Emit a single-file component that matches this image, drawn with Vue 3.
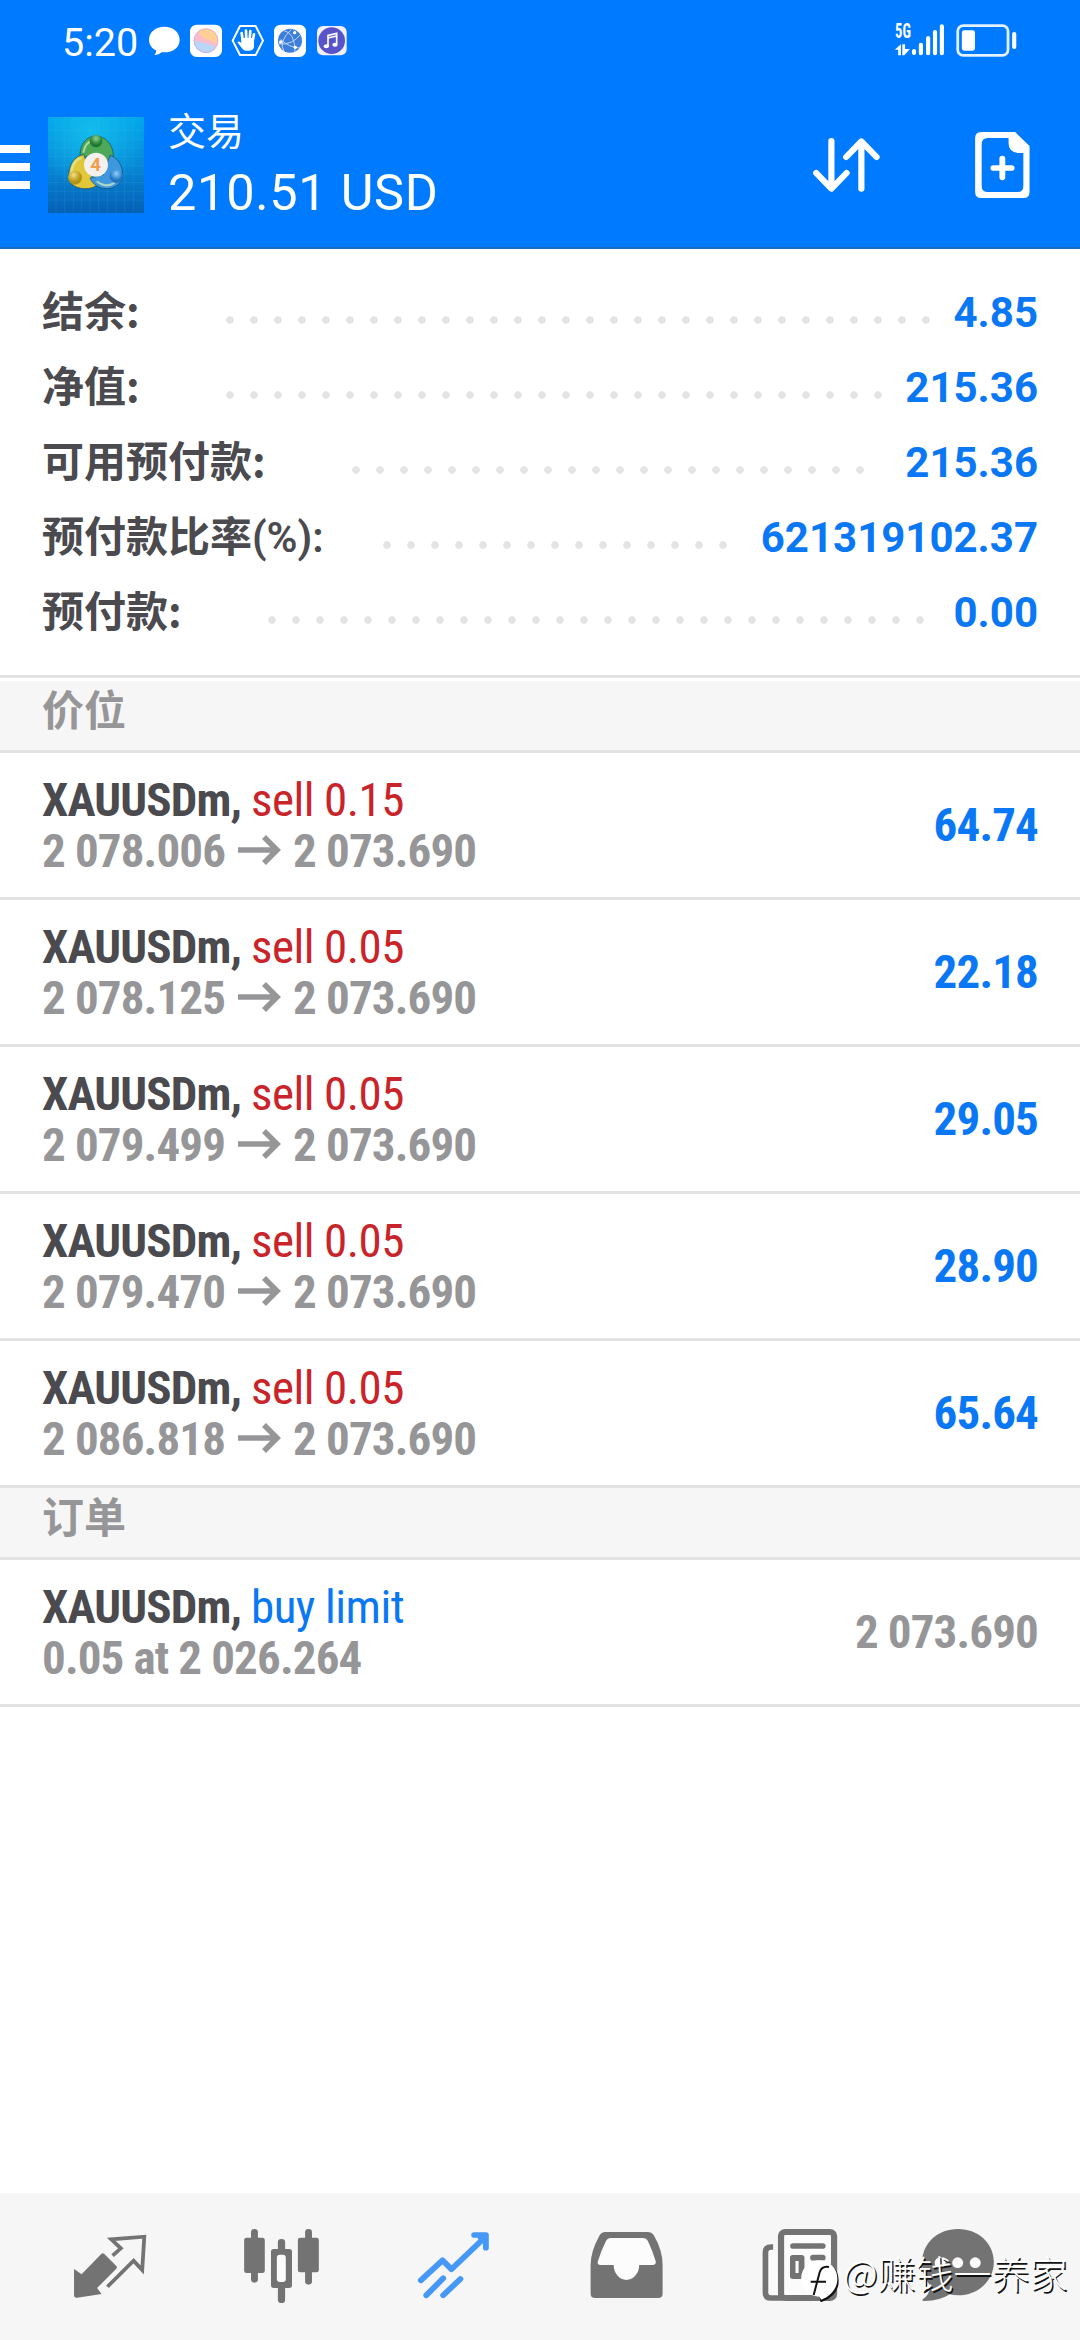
<script setup>
const summary = [
  { label: '结余:', value: '4.85', dots: 30 },
  { label: '净值:', value: '215.36', dots: 28 },
  { label: '可用预付款:', value: '215.36', dots: 22 },
  { label: '预付款比率', unit: '(%):', value: '621319102.37', dots: 15 },
  { label: '预付款:', value: '0.00', dots: 28 },
]

const positions = [
  { volume: '0.15', open: '2 078.006', profit: '64.74' },
  { volume: '0.05', open: '2 078.125', profit: '22.18' },
  { volume: '0.05', open: '2 079.499', profit: '29.05' },
  { volume: '0.05', open: '2 079.470', profit: '28.90' },
  { volume: '0.05', open: '2 086.818', profit: '65.64' },
]
</script>

<template>
  <div class="app">
    <header class="header">
      <div class="status">
        <span class="time">5:20</span>
        <svg class="notices" viewBox="0 0 660 135">
          <path d="M73 20c26 0 46 16 46 39s-20 38-46 38l-8 0c-5 5-13 8-22 8 4-4 6-9 5-14-13-6-21-18-21-32 0-23 20-39 46-39z" fill="#fff" />
          <rect x="150" y="14" width="96" height="97" rx="20" fill="#fff" />
          <circle cx="198" cy="62" r="36" fill="#f9bccb" />
          <path d="M175 34a36 36 0 0 1 58 34c-8 8-17-8-30-10-16-3-22-12-28-24z" fill="#ffcf96" />
          <path d="M162 66c14-8 22 4 33 4 13 0 20 8 33 12a36 36 0 0 1-66-16z" fill="#b9d6f7" />
          <circle cx="198" cy="62" r="36" fill="none" stroke="#d3a0d3" stroke-width="2" />
          <path d="M300 18h47l22 44-22 43h-47l-22-43z" fill="none" stroke="#fff" stroke-width="6" stroke-linejoin="round" />
          <path d="M308 60l-3-21M319 58l-1-26M329 58l2-25M338 64l4-21" stroke="#fff" stroke-width="8" stroke-linecap="round" />
          <path d="M304 54h38v24q0 14-14 14h-11q-7 0-11-7l-14-18q5-6 12 2z" fill="#fff" />
          <rect x="402" y="14" width="96" height="97" rx="20" fill="#fff" />
          <circle cx="450" cy="62" r="36" fill="#3d7ddb" />
          <path d="M432 32q33 6 33 64M417 72q40 4 66-30M432 94q-18-28 22-66M422 58q25 25 58 26" fill="none" stroke="#bcd8fa" stroke-width="3" />
          <circle cx="464" cy="38" r="5" fill="#fff" /><circle cx="422" cy="66" r="5" fill="#fff" /><circle cx="466" cy="82" r="5" fill="#fff" />
          <rect x="531" y="18" width="89" height="88" rx="18" fill="#f3efff" />
          <circle cx="575" cy="62" r="40" fill="#5853c8" />
          <path d="M564 78V46l26-6v33M564 54l26-6" fill="none" stroke="#fff" stroke-width="5" />
          <ellipse cx="559" cy="79" rx="8" ry="6" fill="#fff" /><ellipse cx="585" cy="74" rx="8" ry="6" fill="#fff" />
        </svg>
        <svg class="signal" viewBox="1025 60 365 120" preserveAspectRatio="none">
          <text x="1031" y="115" textLength="46" lengthAdjust="spacingAndGlyphs" class="net">5G</text>
          <path d="M1030 149l18-16v33h-8v-17zM1052 133h8v14h14l-16 19h-6z" fill="#fff" />
          <g stroke="#fff" stroke-width="12" stroke-linecap="round">
            <path d="M1086 153v6M1106 134v26M1127 114v46M1147 96v64M1167 79v81" />
          </g>
          <rect x="1213" y="77" width="146" height="89" rx="16" fill="none" stroke="#e4f1ff" stroke-width="8" />
          <rect x="1225" y="91" width="38" height="61" rx="7" fill="#fff" />
          <rect x="1371" y="96" width="12" height="51" rx="6" fill="#fff" />
        </svg>
      </div>
      <div class="toolbar">
        <div class="menu"><i></i><i></i><i></i></div>
        <svg class="logo" viewBox="54 51 288 288">
          <defs>
            <linearGradient id="bg" x1="0" y1="0" x2="0" y2="1">
              <stop offset="0" stop-color="#00a3ea" /><stop offset=".5" stop-color="#0788d6" /><stop offset="1" stop-color="#0560b4" />
            </linearGradient>
            <radialGradient id="glow" cx=".45" cy=".15" r=".6">
              <stop offset="0" stop-color="#17c3ee" stop-opacity=".8" /><stop offset="1" stop-color="#17c3ee" stop-opacity="0" />
            </radialGradient>
            <radialGradient id="gb" cx=".5" cy=".3"><stop offset="0" stop-color="#8fd08a" /><stop offset="1" stop-color="#1f7a36" /></radialGradient>
            <radialGradient id="yb" cx=".4" cy=".3"><stop offset="0" stop-color="#f6e07a" /><stop offset="1" stop-color="#b39316" /></radialGradient>
            <radialGradient id="bb" cx=".5" cy=".3"><stop offset="0" stop-color="#8fd0fa" /><stop offset="1" stop-color="#1f74c4" /></radialGradient>
          </defs>
          <rect x="54" y="51" width="288" height="288" fill="url(#bg)" />
          <rect x="54" y="51" width="288" height="288" fill="url(#glow)" />
          <path d="M78 51v288M104 51v288M130 51v288M154 51v288M180 51v288M206 51v288M232 51v288M258 51v288M284 51v288M310 51v288M54 92h288M54 118h288M54 144h288M54 170h288M54 196h288M54 222h288M54 248h288M54 274h288M54 300h288" stroke="#5cc4ee" stroke-opacity=".2" stroke-width="2" />
          <g stroke="#0b4a5e" stroke-opacity=".65" stroke-width="3">
            <path d="M150 166c0-34 20-58 48-58s52 26 52 60c0 14-4 26-12 34l-40-40-36 10z" fill="#4da857" />
            <path d="M162 164c-28 2-46 30-46 66 0 20 18 34 46 36 18 1 32-4 40-12l-24-36z" fill="#e0c83a" />
            <path d="M240 166c22 6 38 30 38 58 0 26-24 42-48 42-22 0-42-12-50-32l40-10z" fill="#3f97de" />
          </g>
          <path d="M160 158q6-34 30-36M124 222q2-40 30-48M200 244q30 22 54 4" fill="none" stroke="#d8f0b8" stroke-opacity=".7" stroke-width="6" />
          <circle cx="198" cy="123" r="19" fill="url(#gb)" />
          <circle cx="135" cy="233" r="21" fill="url(#yb)" />
          <circle cx="259" cy="229" r="20" fill="url(#bb)" />
          <circle cx="198" cy="194" r="36" fill="#f4f0ee" />
          <text x="197" y="214" text-anchor="middle" class="four">4</text>
        </svg>
        <div class="heading">
          <div class="title">交易</div>
          <div class="amount">210.51 USD</div>
        </div>
        <svg class="sort" viewBox="780 396 220 200" preserveAspectRatio="none">
          <path d="M845 423v142M801 519l44 47 44-47M932 566V425M888 471l44-47 44 47" fill="none" stroke="#fff" stroke-width="18" stroke-linecap="round" stroke-linejoin="round" />
        </svg>
        <svg class="doc" viewBox="1250 390 180 210" preserveAspectRatio="none">
          <path fill="#fff" fill-rule="evenodd" d="M1280 396h98l42 42v138q0 18-17 18h-123q-18 0-18-18V414q0-18 18-18zM1299 414q-18 0-18 18v125q0 19 18 19h86q17 0 17-19v-98h-14q-29-2-29-30v-15z" />
          <path d="M1341 476v56M1315 504h53" stroke="#fff" stroke-width="17" stroke-linecap="round" />
        </svg>
      </div>
    </header>

    <main class="content">
      <section class="summary">
        <div v-for="row in summary" :key="row.label" class="account">
          <span class="label">{{ row.label }}<span v-if="row.unit" class="unit">{{ row.unit }}</span></span>
          <span class="leader" :class="{ near: row.unit }" :style="{ width: row.dots * 24 + 'px' }"></span>
          <span class="value">{{ row.value }}</span>
        </div>
      </section>

      <h2 class="section">价位</h2>
      <article v-for="p in positions" :key="p.open" class="deal">
        <div>
          <div class="line"><b>XAUUSDm,</b> <span class="sell">sell {{ p.volume }}</span></div>
          <div class="line prices">{{ p.open }}<svg class="arrow" viewBox="0 0 43 30"><path d="M0 15h38M26 2l13 13-13 13" fill="none" stroke="#969698" stroke-width="5.6" /></svg>2 073.690</div>
        </div>
        <div class="profit">{{ p.profit }}</div>
      </article>

      <h2 class="section">订单</h2>
      <article class="deal">
        <div>
          <div class="line"><b>XAUUSDm,</b> <span class="buy">buy limit</span></div>
          <div class="line prices">0.05 at 2 026.264</div>
        </div>
        <div class="profit price">2 073.690</div>
      </article>
    </main>

    <nav class="tabs">
      <svg viewBox="69.7 39 499.5 441" preserveAspectRatio="none">
        <path d="M215 267l22 16 57-61q4-5 9 0l34 35q5 5 0 10l-55 57 13 18-71 11q-9 2-9-7z" fill="#737373" />
        <path d="M327 227l24-22-28-27 96-8-6 100-25-28-76 78" fill="none" stroke="#737373" stroke-width="11" />
      </svg>
      <svg viewBox="569.2 39 499.5 441" preserveAspectRatio="none">
        <g fill="#737373">
          <rect x="729" y="147" width="20" height="161" rx="10" /><rect x="709" y="173" width="60" height="106" rx="7" />
          <rect x="807" y="177" width="21" height="192" rx="10" /><rect x="787" y="207" width="61" height="117" rx="8" />
          <rect x="886" y="147" width="20" height="167" rx="10" /><rect x="865" y="173" width="61" height="104" rx="7" />
        </g>
        <rect x="804" y="224" width="26" height="82" rx="9" fill="#fbfbfb" />
      </svg>
      <svg viewBox="1068.7 39 499.5 441" preserveAspectRatio="none">
        <g fill="none" stroke="#4598f5" stroke-width="17" stroke-linecap="round" stroke-linejoin="round">
          <path d="M1222 301l63-60 26 27 96-95M1238 346l49-51M1287 346l50-49" />
          <path d="M1377 165h34v38" /><path d="M1396 173l8 8" />
        </g>
      </svg>
      <svg viewBox="0 39 499.5 441" preserveAspectRatio="none">
        <path d="M190 156H313Q324 156 330 165Q356 210 356 255V341Q356 354 343 354H160Q147 354 147 341V255Q147 215 172 168Q178 156 190 156Z" fill="#737373" />
        <path d="M204 174H300Q309 174 313 182Q326 210 336 244Q338 255 327 255H288A37 45 0 0 1 214 255H176Q165 255 168 244Q176 215 192 182Q196 174 204 174Z" fill="#fcfcfc" />
      </svg>
      <svg viewBox="499.5 39 499.5 441" preserveAspectRatio="none">
        <path d="M677 201h-6q-16 0-16 16v121q0 16 16 16h36" fill="#fbfbfb" stroke="#737373" stroke-width="17" />
        <rect x="664" y="210" width="24" height="135" rx="6" fill="#fbfbfb" />
        <rect x="700" y="156" width="154" height="198" rx="12" fill="#fbfbfb" stroke="#737373" stroke-width="18" />
        <path d="M735 198h86M793 233h28" stroke="#737373" stroke-width="17" stroke-linecap="round" />
        <rect x="726" y="225" width="42" height="72" rx="8" fill="#737373" />
        <rect x="742" y="243" width="9" height="36" fill="#fbfbfb" />
      </svg>
      <svg viewBox="999 39 499.5 441" preserveAspectRatio="none">
        <path d="M1214 147c60 0 104 44 104 99s-44 100-104 100q-12 0-24-3-30 20-72 20-10 0-8-4 22-14 24-42c-16-18-24-42-24-71 0-55 44-99 104-99z" fill="#737373" />
        <g fill="#fbfbfb"><circle cx="1162" cy="248" r="16" /><circle cx="1213" cy="248" r="16" /><circle cx="1264" cy="248" r="16" /></g>
      </svg>
    </nav>

    <div class="watermark">
      <svg class="badge" viewBox="150 115 120 132">
        <path d="M222 126q44 12 44 58 0 46-54 64l-4-18q34-24 34-64z" fill="#111" />
        <path d="M208 122a54 54 0 0 1 54 56c0 30-22 52-48 62l-6-9a54 54 0 0 1 0-109z" fill="#fff" />
        <path d="M237 142q-22-4-28 16l-18 68M182 186h46" fill="none" stroke="#111" stroke-width="6" />
      </svg>
      <span>@赚钱一养家</span>
    </div>
  </div>
</template>

<style>
body {
  margin: 0;
  background: #fff;
}
</style>

<style scoped>
.app {
  position: relative;
  display: flex;
  flex-direction: column;
  width: 1080px;
  height: 2340px;
  overflow: hidden;
  background: #fff;
  font-family: Roboto, "Noto Sans CJK SC", sans-serif;
}
svg {
  display: block;
  flex: none;
}
.header {
  height: 247px;
  background: #007aff;
  border-bottom: 2px solid #1a6cc4;
  color: #fff;
}
.status {
  display: flex;
  height: 80px;
  box-sizing: border-box;
  padding: 20px 61px 0 62px;
}
.time {
  width: 78px;
  font-size: 39.5px;
  line-height: 45px;
  font-weight: 440;
}
.notices {
  width: 220px;
  height: 45px;
}
.signal {
  width: 125.7px;
  height: 40px;
  margin-left: auto;
}
.net {
  font: 700 59px "Roboto Condensed", Roboto, sans-serif;
  fill: #fff;
}
.toolbar {
  display: flex;
  align-items: center;
  height: 170px;
  padding-right: 47px;
}
.menu {
  display: flex;
  flex-direction: column;
  gap: 10px;
  width: 30px;
  margin: 4px 18px 0 0;
}
.menu i {
  height: 8px;
  background: #fff;
}
.logo {
  width: 96px;
  height: 96px;
}
.four {
  font: 700 56px Roboto, sans-serif;
  fill: #f0a04c;
}
.heading {
  flex: 1;
  margin-left: 24px;
}
.title {
  margin-bottom: 3px;
  font-size: 38px;
  line-height: 54px;
}
.amount {
  padding-bottom: 1px;
  font-size: 50.5px;
  line-height: 62px;
  letter-spacing: 0.7px;
}
.sort {
  width: 75.8px;
  height: 66.7px;
}
.doc {
  width: 62px;
  height: 70px;
  margin-left: 86px;
}
.content {
  flex: 1;
}
.summary {
  padding: 26px 42px 25px;
  border-bottom: 3px solid #e3e3e3;
  margin-bottom: 3px;
}
.account {
  display: flex;
  align-items: baseline;
  height: 75px;
  font-size: 42px;
  font-weight: 700;
}
.label {
  font-family: "Noto Sans CJK SC", sans-serif;
  line-height: 67px;
  color: #4a4a4f;
}
.unit {
  font-family: Roboto, sans-serif;
  font-weight: 600;
  line-height: 1;
}
.leader {
  align-self: center;
  height: 8px;
  margin: 15px 0 0 78px;
  background: radial-gradient(circle at center, #e3e3e4 3.4px, transparent 4.1px) 0 0 / 24px 8px repeat-x;
}
.leader.near {
  margin-left: 51px;
}
.value {
  margin-left: auto;
  line-height: 75px;
  color: #0a78f5;
}
.section {
  height: 69px;
  margin: 0;
  padding-left: 42px;
  border-bottom: 3px solid #e3e3e3;
  background: #f6f6f6;
  color: #969698;
  font: 700 42px/53px "Noto Sans CJK SC", sans-serif;
}
.deal {
  display: flex;
  justify-content: space-between;
  height: 144px;
  padding: 0 42px;
  border-bottom: 3px solid #e3e3e3;
  font-family: "Roboto Condensed", Roboto, sans-serif;
  font-size: 47px;
  letter-spacing: -0.85px;
}
.line {
  line-height: 51px;
  color: #4a4a4f;
}
.line:first-child {
  margin-top: 21px;
}
.sell,
.buy {
  letter-spacing: -0.55px;
}
.sell {
  color: #c8242a;
}
.buy {
  color: #0a78f5;
}
.prices {
  font-weight: 700;
  color: #969698;
}
.arrow {
  display: inline-block;
  width: 43px;
  height: 30px;
  margin: 0 12px 0 13px;
  vertical-align: 2px;
}
.profit {
  font-weight: 700;
  line-height: 144px;
  color: #0a78f5;
}
.price {
  color: #969698;
}
.tabs {
  display: flex;
  height: 147px;
  padding-left: 24px;
  background: #f6f6f6;
}
.tabs svg {
  width: 172px;
  height: 147px;
}
.watermark {
  position: absolute;
  left: 800px;
  top: 2258px;
  display: flex;
  color: #fff;
  font: 300 38px/44px "Noto Sans CJK SC", sans-serif;
  text-shadow: 1.5px 1.5px 0 #111;
  white-space: nowrap;
}
.badge {
  width: 40px;
  height: 44px;
  margin-right: 3px;
}
.watermark span {
  margin-top: -8px;
}
</style>
